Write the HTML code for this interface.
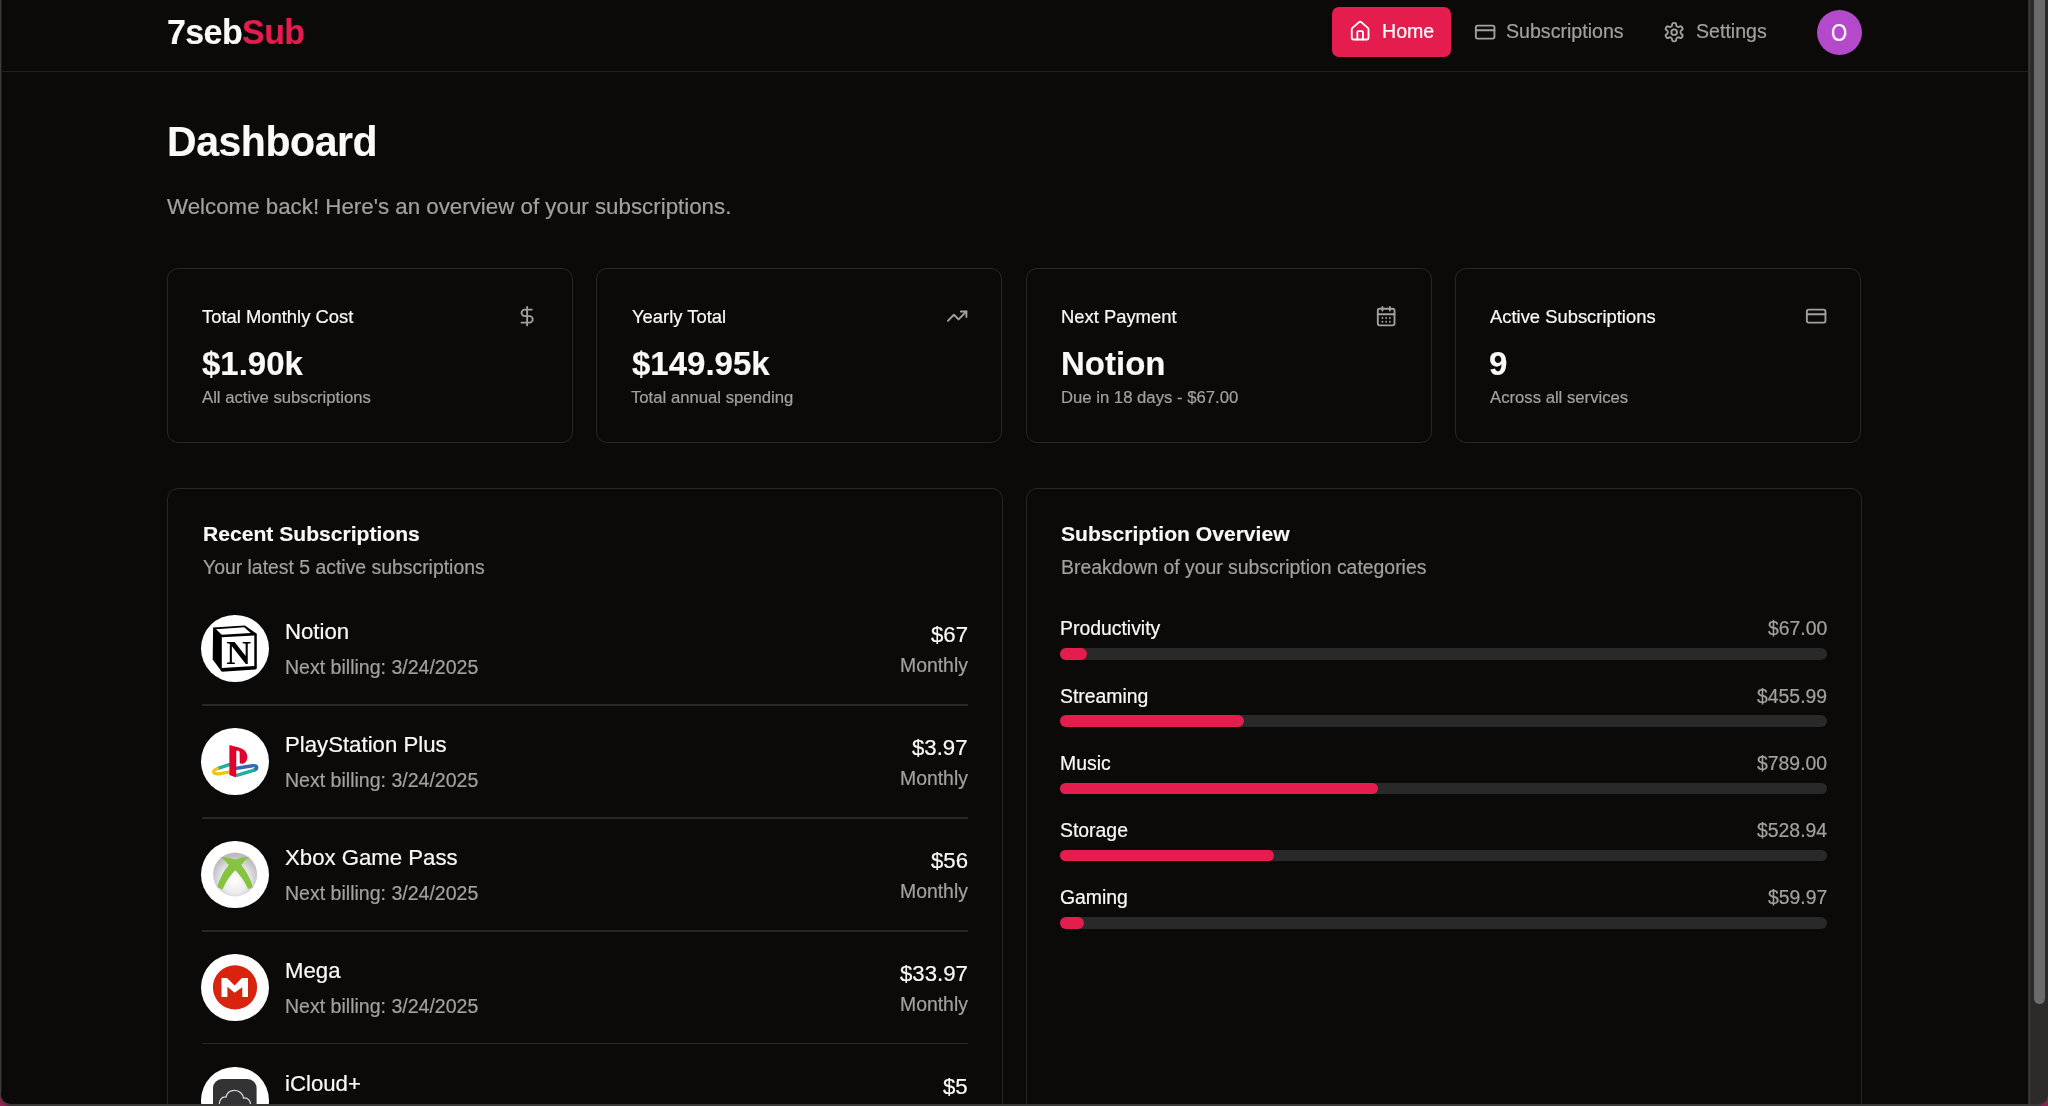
<!DOCTYPE html>
<html><head><meta charset="utf-8"><title>7sebSub Dashboard</title>
<style>
html,body{margin:0;padding:0;width:2048px;height:1106px;overflow:hidden;background:#0c0a09;}
body{position:relative;font-family:"Liberation Sans",sans-serif;}
.t{position:absolute;line-height:1;white-space:nowrap;will-change:transform;-webkit-text-stroke:0.2px currentColor;}
.b{-webkit-text-stroke:0.2px currentColor;}
</style></head><body>
<div style="position:absolute;left:0.00px;top:71.00px;width:2028.00px;height:1.00px;background:#222120"></div>
<div class="t" style="left:167.40px;top:15.48px;font-size:34px;color:#fafaf9;font-weight:700;-webkit-text-stroke:0.15px currentColor;letter-spacing:-0.6px;transform:scaleY(1.04);transform-origin:0 83%;">7seb<span style="color:#e41d4e">Sub</span></div>
<div style="position:absolute;left:1332.00px;top:7.00px;width:119.00px;height:50.00px;background:#e41d4e;border-radius:7px"></div>
<svg style="position:absolute;left:1348.90px;top:19.60px" width="22.3" height="22.3" viewBox="0 0 24 24" fill="none" stroke="#fff" stroke-width="2" stroke-linecap="round" stroke-linejoin="round"><path d="M15 21v-8a1 1 0 0 0-1-1h-4a1 1 0 0 0-1 1v8"/><path d="M3 10a2 2 0 0 1 .709-1.528l7-5.999a2 2 0 0 1 2.582 0l7 5.999A2 2 0 0 1 21 10v9a2 2 0 0 1-2 2H5a2 2 0 0 1-2-2z"/></svg>
<div class="t" style="left:1382.30px;top:22.23px;font-size:19.6px;color:#fff;">Home</div>
<svg style="position:absolute;left:1473.60px;top:20.70px" width="22.3" height="22.3" viewBox="0 0 24 24" fill="none" stroke="#a3a19e" stroke-width="2" stroke-linecap="round" stroke-linejoin="round"><rect width="20" height="14" x="2" y="5" rx="2"/><line x1="2" x2="22" y1="10" y2="10"/></svg>
<div class="t" style="left:1506.10px;top:22.33px;font-size:19.6px;color:#a3a19e;">Subscriptions</div>
<svg style="position:absolute;left:1663.20px;top:20.80px" width="22.3" height="22.3" viewBox="0 0 24 24" fill="none" stroke="#a3a19e" stroke-width="2" stroke-linecap="round" stroke-linejoin="round"><path d="M12.22 2h-.44a2 2 0 0 0-2 2v.18a2 2 0 0 1-1 1.73l-.43.25a2 2 0 0 1-2 0l-.15-.08a2 2 0 0 0-2.73.73l-.22.38a2 2 0 0 0 .73 2.73l.15.1a2 2 0 0 1 1 1.72v.51a2 2 0 0 1-1 1.74l-.15.09a2 2 0 0 0-.73 2.73l.22.38a2 2 0 0 0 2.73.73l.15-.08a2 2 0 0 1 2 0l.43.25a2 2 0 0 1 1 1.73V20a2 2 0 0 0 2 2h.44a2 2 0 0 0 2-2v-.18a2 2 0 0 1 1-1.73l.43-.25a2 2 0 0 1 2 0l.15.08a2 2 0 0 0 2.73-.73l.22-.39a2 2 0 0 0-.73-2.73l-.15-.08a2 2 0 0 1-1-1.74v-.5a2 2 0 0 1 1-1.74l.15-.09a2 2 0 0 0 .73-2.73l-.22-.38a2 2 0 0 0-2.73-.73l-.15.08a2 2 0 0 1-2 0l-.43-.25a2 2 0 0 1-1-1.73V4a2 2 0 0 0-2-2z"/><circle cx="12" cy="12" r="3"/></svg>
<div class="t" style="left:1696.30px;top:22.03px;font-size:19.6px;color:#a3a19e;">Settings</div>
<div style="position:absolute;left:1817.00px;top:9.50px;width:45.00px;height:45.00px;background:#b44acb;border-radius:50%"></div>
<div class="t" style="left:1831.20px;top:21.08px;font-size:24px;color:#fff;transform:scaleX(0.86);transform-origin:0 0;">O</div>
<div class="t" style="left:166.50px;top:121.97px;font-size:41px;color:#fafaf9;font-weight:700;-webkit-text-stroke:0.15px currentColor;letter-spacing:-0.45px;transform:scaleY(1.04);transform-origin:0 83%;">Dashboard</div>
<div class="t" style="left:167.10px;top:195.77px;font-size:22.32px;color:#a3a19e;">Welcome back! Here's an overview of your subscriptions.</div>
<div style="position:absolute;left:166.60px;top:268.10px;width:406.40px;height:175.20px;box-sizing:border-box;border:1px solid #292725;border-radius:11px"></div>
<div class="t" style="left:202.00px;top:307.63px;font-size:18.4px;color:#fafaf9;">Total Monthly Cost</div>
<svg style="position:absolute;left:516.30px;top:305.40px" width="22.3" height="22.3" viewBox="0 0 24 24" fill="none" stroke="#a3a19e" stroke-width="2" stroke-linecap="round" stroke-linejoin="round"><line x1="12" x2="12" y1="2" y2="22"/><path d="M17 5H9.5a3.5 3.5 0 0 0 0 7h5a3.5 3.5 0 0 1 0 7H6"/></svg>
<div class="t" style="left:202.00px;top:346.91px;font-size:33px;color:#fafaf9;font-weight:700;-webkit-text-stroke:0.15px currentColor;transform:scaleY(1.03);transform-origin:0 83%;">$1.90k</div>
<div class="t" style="left:201.60px;top:390.04px;font-size:16.7px;color:#a3a19e;">All active subscriptions</div>
<div style="position:absolute;left:596.10px;top:268.10px;width:406.40px;height:175.20px;box-sizing:border-box;border:1px solid #292725;border-radius:11px"></div>
<div class="t" style="left:631.50px;top:307.63px;font-size:18.4px;color:#fafaf9;">Yearly Total</div>
<svg style="position:absolute;left:945.80px;top:305.40px" width="22.3" height="22.3" viewBox="0 0 24 24" fill="none" stroke="#a3a19e" stroke-width="2" stroke-linecap="round" stroke-linejoin="round"><polyline points="22 7 13.5 15.5 8.5 10.5 2 17"/><polyline points="16 7 22 7 22 13"/></svg>
<div class="t" style="left:631.50px;top:346.91px;font-size:33px;color:#fafaf9;font-weight:700;-webkit-text-stroke:0.15px currentColor;transform:scaleY(1.03);transform-origin:0 83%;">$149.95k</div>
<div class="t" style="left:631.10px;top:390.04px;font-size:16.7px;color:#a3a19e;">Total annual spending</div>
<div style="position:absolute;left:1025.60px;top:268.10px;width:406.40px;height:175.20px;box-sizing:border-box;border:1px solid #292725;border-radius:11px"></div>
<div class="t" style="left:1061.00px;top:307.63px;font-size:18.4px;color:#fafaf9;">Next Payment</div>
<svg style="position:absolute;left:1375.30px;top:305.40px" width="22.3" height="22.3" viewBox="0 0 24 24" fill="none" stroke="#a3a19e" stroke-width="2" stroke-linecap="round" stroke-linejoin="round"><path d="M8 2v4"/><path d="M16 2v4"/><rect width="18" height="18" x="3" y="4" rx="2"/><path d="M3 10h18"/><path d="M8 14h.01"/><path d="M12 14h.01"/><path d="M16 14h.01"/><path d="M8 18h.01"/><path d="M12 18h.01"/><path d="M16 18h.01"/></svg>
<div class="t" style="left:1061.00px;top:346.91px;font-size:33px;color:#fafaf9;font-weight:700;-webkit-text-stroke:0.15px currentColor;transform:scaleY(1.03);transform-origin:0 83%;">Notion</div>
<div class="t" style="left:1060.60px;top:390.04px;font-size:16.7px;color:#a3a19e;">Due in 18 days - $67.00</div>
<div style="position:absolute;left:1455.10px;top:268.10px;width:406.40px;height:175.20px;box-sizing:border-box;border:1px solid #292725;border-radius:11px"></div>
<div class="t" style="left:1489.50px;top:307.63px;font-size:18.4px;color:#fafaf9;">Active Subscriptions</div>
<svg style="position:absolute;left:1804.80px;top:305.40px" width="22.3" height="22.3" viewBox="0 0 24 24" fill="none" stroke="#a3a19e" stroke-width="2" stroke-linecap="round" stroke-linejoin="round"><rect width="20" height="14" x="2" y="5" rx="2"/><line x1="2" x2="22" y1="10" y2="10"/></svg>
<div class="t" style="left:1489.10px;top:346.91px;font-size:33px;color:#fafaf9;font-weight:700;-webkit-text-stroke:0.15px currentColor;transform:scaleY(1.03);transform-origin:0 83%;">9</div>
<div class="t" style="left:1490.10px;top:390.04px;font-size:16.7px;color:#a3a19e;">Across all services</div>
<div style="position:absolute;left:166.60px;top:488.20px;width:836.30px;height:700.00px;box-sizing:border-box;border:1px solid #292725;border-radius:11px"></div>
<div style="position:absolute;left:1025.60px;top:488.20px;width:836.30px;height:700.00px;box-sizing:border-box;border:1px solid #292725;border-radius:11px"></div>
<div class="t" style="left:202.90px;top:523.29px;font-size:21.1px;color:#fafaf9;font-weight:700;-webkit-text-stroke:0.15px currentColor;">Recent Subscriptions</div>
<div class="t" style="left:203.00px;top:557.50px;font-size:19.4px;color:#a3a19e;">Your latest 5 active subscriptions</div>
<div class="t" style="left:1061.30px;top:523.29px;font-size:21.1px;color:#fafaf9;font-weight:700;-webkit-text-stroke:0.15px currentColor;">Subscription Overview</div>
<div class="t" style="left:1060.80px;top:557.50px;font-size:19.4px;color:#a3a19e;">Breakdown of your subscription categories</div>
<div style="position:absolute;left:201.20px;top:614.90px;width:67.60px;height:67.60px;background:#fff;border-radius:50%"></div>
<!--logo0-->
<div class="t" style="left:284.60px;top:621.07px;font-size:22.2px;color:#fafaf9;">Notion</div>
<div class="t" style="left:285.00px;top:658.27px;font-size:19.55px;color:#a3a19e;">Next billing: 3/24/2025</div>
<div class="t" style="right:1080.00px;top:624.17px;font-size:22.2px;color:#fafaf9;text-align:right;">$67</div>
<div class="t" style="right:1080.00px;top:655.90px;font-size:19.4px;color:#a3a19e;text-align:right;">Monthly</div>
<div style="position:absolute;left:201.60px;top:704.40px;width:766.40px;height:1.40px;background:#292725"></div>
<div style="position:absolute;left:201.20px;top:727.80px;width:67.60px;height:67.60px;background:#fff;border-radius:50%"></div>
<!--logo1-->
<div class="t" style="left:284.60px;top:733.97px;font-size:22.2px;color:#fafaf9;">PlayStation Plus</div>
<div class="t" style="left:285.00px;top:771.17px;font-size:19.55px;color:#a3a19e;">Next billing: 3/24/2025</div>
<div class="t" style="right:1080.00px;top:737.07px;font-size:22.2px;color:#fafaf9;text-align:right;">$3.97</div>
<div class="t" style="right:1080.00px;top:768.80px;font-size:19.4px;color:#a3a19e;text-align:right;">Monthly</div>
<div style="position:absolute;left:201.60px;top:817.30px;width:766.40px;height:1.40px;background:#292725"></div>
<div style="position:absolute;left:201.20px;top:840.70px;width:67.60px;height:67.60px;background:#fff;border-radius:50%"></div>
<!--logo2-->
<div class="t" style="left:284.60px;top:846.87px;font-size:22.2px;color:#fafaf9;">Xbox Game Pass</div>
<div class="t" style="left:285.00px;top:884.07px;font-size:19.55px;color:#a3a19e;">Next billing: 3/24/2025</div>
<div class="t" style="right:1080.00px;top:849.97px;font-size:22.2px;color:#fafaf9;text-align:right;">$56</div>
<div class="t" style="right:1080.00px;top:881.70px;font-size:19.4px;color:#a3a19e;text-align:right;">Monthly</div>
<div style="position:absolute;left:201.60px;top:930.20px;width:766.40px;height:1.40px;background:#292725"></div>
<div style="position:absolute;left:201.20px;top:953.60px;width:67.60px;height:67.60px;background:#fff;border-radius:50%"></div>
<!--logo3-->
<div class="t" style="left:284.60px;top:959.77px;font-size:22.2px;color:#fafaf9;">Mega</div>
<div class="t" style="left:285.00px;top:996.97px;font-size:19.55px;color:#a3a19e;">Next billing: 3/24/2025</div>
<div class="t" style="right:1080.00px;top:962.87px;font-size:22.2px;color:#fafaf9;text-align:right;">$33.97</div>
<div class="t" style="right:1080.00px;top:994.60px;font-size:19.4px;color:#a3a19e;text-align:right;">Monthly</div>
<div style="position:absolute;left:201.60px;top:1043.10px;width:766.40px;height:1.40px;background:#292725"></div>
<div style="position:absolute;left:201.20px;top:1066.50px;width:67.60px;height:67.60px;background:#fff;border-radius:50%"></div>
<!--logo4-->
<div class="t" style="left:284.60px;top:1072.67px;font-size:22.2px;color:#fafaf9;">iCloud+</div>
<div class="t" style="left:285.00px;top:1109.87px;font-size:19.55px;color:#a3a19e;">Next billing: 3/24/2025</div>
<div class="t" style="right:1080.00px;top:1075.77px;font-size:22.2px;color:#fafaf9;text-align:right;">$5</div>
<div class="t" style="right:1080.00px;top:1107.50px;font-size:19.4px;color:#a3a19e;text-align:right;">Monthly</div>
<svg style="position:absolute;left:0;top:0" width="2048" height="1106" viewBox="0 0 2048 1106"><g><polygon points="213.1,627.5 244.9,625.4 256.8,633.7 256.8,668.4 255.4,669.6 221.8,671.8 212.7,659.5" fill="#000"/><polygon points="216.0,629.3 244.2,627.2 250.7,633.0 221.8,634.8" fill="#fff"/><polygon points="221.8,637.3 254.3,635.5 254.3,665.9 221.8,668.0" fill="#fff"/><text x="238.6" y="663.7" text-anchor="middle" font-family="Liberation Serif" font-weight="700" font-size="34.4" fill="#000">N</text></g><g transform="translate(0 112.90)"><g transform="translate(0 -112.9)"><path d="M229.2,764.6 L217.5,768.6" stroke="#1fae9f" stroke-width="3.4" stroke-linecap="round" fill="none"/><path d="M217.5,768.6 C211.5,771 213,774.2 218.5,773.8 L230,771.8" stroke="#f2c21b" stroke-width="3.2" stroke-linecap="round" fill="none"/><path d="M236.8,768.2 L252.5,765.7 C257.8,765 258,769.2 253.5,770.3" stroke="#2f6bb5" stroke-width="3.4" stroke-linecap="round" fill="none"/><path d="M253.5,770.3 L237.5,775.2" stroke="#1fae9f" stroke-width="3.4" stroke-linecap="round" fill="none"/><path d="M229.4,744.9 C236,746.5 241,747.8 244,750 C247.8,752.8 248.2,758.5 246,761.5 C244.3,763.8 241.8,764.2 239.8,763.3 L239.6,752.6 C239.6,751.3 238.8,750.8 237.6,750.8 L236.3,750.8 L236.2,777.4 L229.4,775 Z" fill="#e3002d"/></g></g><defs><radialGradient id="xg" cx="0.5" cy="0.62" r="0.55"><stop offset="0" stop-color="#ffffff"/><stop offset="0.55" stop-color="#ebebeb"/><stop offset="1" stop-color="#bdbcc2"/></radialGradient></defs><g><circle cx="235.1" cy="874.5" r="22" fill="url(#xg)"/><path d="M220.4,856.8 Q228,857 235.1,859.6 Q242,857 249.6,856.8 Q245,860 241.2,864.9 Q249,874 252.9,887.1 Q250.5,888.5 248.0,888.9 Q243,878 235.3,870.3 Q227.5,878 222.5,889.6 Q219.5,888.5 217.2,887.1 Q221,874 228.8,864.9 Q224.5,860 220.4,856.8 Z" fill="#86c43f"/></g><g><circle cx="235.0" cy="987.3" r="22.1" fill="#d8230f"/><polygon points="221.5,978.0 227.0,978.0 234.6,985.6 241.9,978.0 248.0,978.0 248.0,997.0 242.3,997.0 242.3,987.3 234.6,992.8 227.4,986.8 227.4,997.0 221.5,997.0" fill="#fff"/></g><g><rect x="213" y="1079" width="43.6" height="43.6" rx="9" fill="#333335"/><path d="M219.5,1106 C218.5,1100 222,1096.5 226,1097 C227,1092.5 230.5,1090.3 234.5,1090.3 C239.5,1090.3 243,1094 243.5,1098 C248,1097.5 251,1101 250.5,1106" stroke="#d6d6d6" stroke-width="1.3" fill="none"/></g></svg>
<div class="t" style="left:1060.00px;top:619.40px;font-size:19.4px;color:#fafaf9;">Productivity</div>
<div class="t" style="right:221.00px;top:619.40px;font-size:19.4px;color:#a3a19e;text-align:right;">$67.00</div>
<div style="position:absolute;left:1060.30px;top:648.10px;width:766.50px;height:11.70px;background:#2a2929;border-radius:6px"></div>
<div style="position:absolute;left:1060.30px;top:648.10px;width:27.02px;height:11.70px;background:#e41d4e;border-radius:6px"></div>
<div class="t" style="left:1060.00px;top:686.60px;font-size:19.4px;color:#fafaf9;">Streaming</div>
<div class="t" style="right:221.00px;top:686.60px;font-size:19.4px;color:#a3a19e;text-align:right;">$455.99</div>
<div style="position:absolute;left:1060.30px;top:715.30px;width:766.50px;height:11.70px;background:#2a2929;border-radius:6px"></div>
<div style="position:absolute;left:1060.30px;top:715.30px;width:183.87px;height:11.70px;background:#e41d4e;border-radius:6px"></div>
<div class="t" style="left:1060.00px;top:753.80px;font-size:19.4px;color:#fafaf9;">Music</div>
<div class="t" style="right:221.00px;top:753.80px;font-size:19.4px;color:#a3a19e;text-align:right;">$789.00</div>
<div style="position:absolute;left:1060.30px;top:782.50px;width:766.50px;height:11.70px;background:#2a2929;border-radius:6px"></div>
<div style="position:absolute;left:1060.30px;top:782.50px;width:318.15px;height:11.70px;background:#e41d4e;border-radius:6px"></div>
<div class="t" style="left:1060.00px;top:821.00px;font-size:19.4px;color:#fafaf9;">Storage</div>
<div class="t" style="right:221.00px;top:821.00px;font-size:19.4px;color:#a3a19e;text-align:right;">$528.94</div>
<div style="position:absolute;left:1060.30px;top:849.70px;width:766.50px;height:11.70px;background:#2a2929;border-radius:6px"></div>
<div style="position:absolute;left:1060.30px;top:849.70px;width:213.28px;height:11.70px;background:#e41d4e;border-radius:6px"></div>
<div class="t" style="left:1060.00px;top:888.20px;font-size:19.4px;color:#fafaf9;">Gaming</div>
<div class="t" style="right:221.00px;top:888.20px;font-size:19.4px;color:#a3a19e;text-align:right;">$59.97</div>
<div style="position:absolute;left:1060.30px;top:916.90px;width:766.50px;height:11.70px;background:#2a2929;border-radius:6px"></div>
<div style="position:absolute;left:1060.30px;top:916.90px;width:24.18px;height:11.70px;background:#e41d4e;border-radius:6px"></div>
<div style="position:absolute;left:0.00px;top:1094.00px;width:12.00px;height:12.00px;background:#8c2350"></div>
<div style="position:absolute;left:2036.00px;top:1094.00px;width:12.00px;height:12.00px;background:#8c2350"></div>
<div style="position:absolute;left:0.00px;top:1070.00px;width:40.00px;height:36.00px;box-sizing:border-box;background:#0c0a09;border-left:1px solid #3d3c3a;border-bottom:2px solid #3a3938;border-bottom-left-radius:11px"></div>
<div style="position:absolute;left:0.00px;top:0.00px;width:1.00px;height:1092.00px;background:#3d3c3a"></div>
<div style="position:absolute;left:1.00px;top:0.00px;width:1.00px;height:1092.00px;background:#1d1c1a"></div>
<div style="position:absolute;left:30.00px;top:1104.00px;width:2000.00px;height:2.00px;background:#3a3938"></div>
<div style="position:absolute;left:2028.00px;top:0.00px;width:20.00px;height:1062.00px;background:#2c2b29"></div>
<div style="position:absolute;left:2028.00px;top:1060.00px;width:20.00px;height:46.00px;box-sizing:border-box;background:#2c2b29;border-bottom:2px solid #3a3938;border-bottom-right-radius:11px"></div>
<div style="position:absolute;left:2028.50px;top:0.00px;width:1.20px;height:1106.00px;background:#3c3b39"></div>
<div style="position:absolute;left:2034.00px;top:0.00px;width:11.20px;height:1004.00px;background:#6b6b6b;border-radius:0 0 6px 6px"></div>
</body></html>
